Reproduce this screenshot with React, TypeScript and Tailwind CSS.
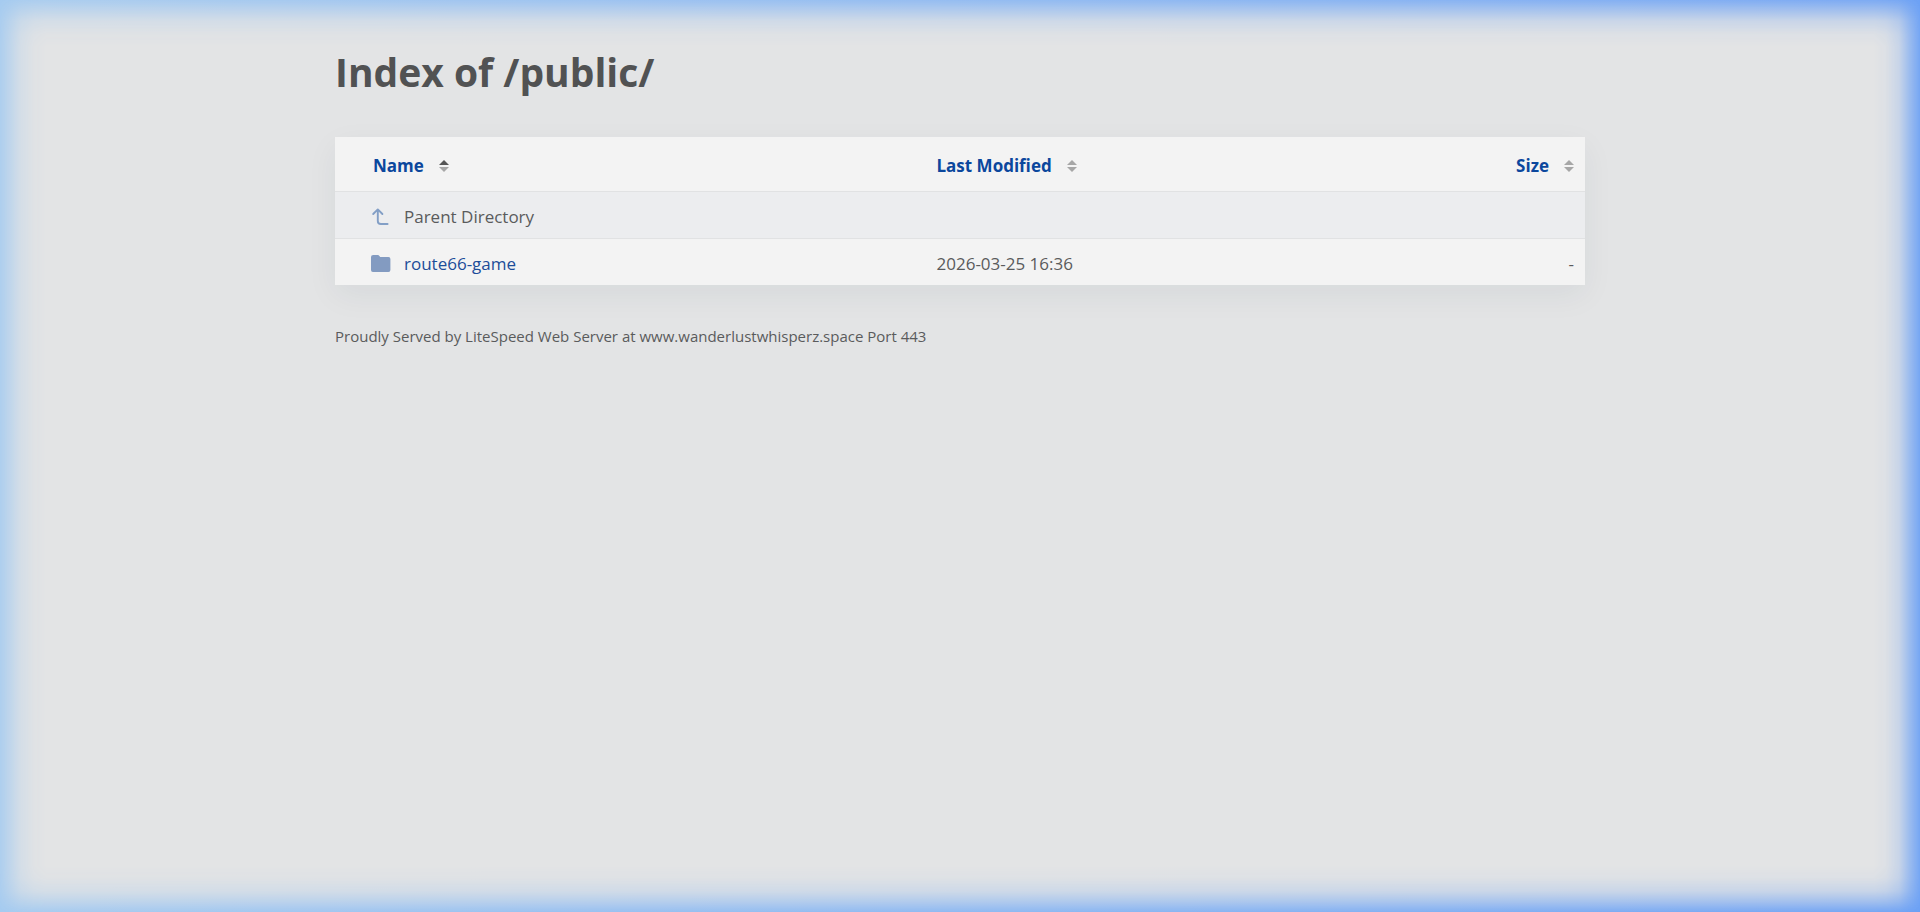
import clsx from "clsx";

type SortIconProps = {
  active?: boolean;
};

function SortIcon({ active }: SortIconProps) {
  return (
    <svg width="10" height="12" viewBox="0 0 10 12" className="shrink-0" aria-hidden="true">
      <path d="M5 0 10 5H0z" fill={active ? "#555555" : "#a6a6a6"} />
      <path d="M0 7h10L5 12z" fill="#a6a6a6" />
    </svg>
  );
}

function ParentIcon() {
  return (
    <svg
      width="20"
      height="20"
      viewBox="0 0 20 20"
      fill="none"
      stroke="#839fc6"
      strokeWidth="1.9"
      strokeLinecap="round"
      strokeLinejoin="round"
      className="shrink-0"
      aria-hidden="true"
    >
      <path d="M2.2 7 6.8 2.4 11.4 7M6.8 3v11q0 3 3 3h6.8" />
    </svg>
  );
}

function FolderIcon() {
  return (
    <svg width="20" height="20" viewBox="0 0 20 20" className="shrink-0" aria-hidden="true">
      <path
        d="M2.2 1h4.6q1 0 1.6.9l.8 1.2h8.3q1.9 0 1.9 1.9v11.1q0 1.9-1.9 1.9H1.9Q0 18 0 16.1V3q0-2 2.2-2z"
        fill="#839bc1"
      />
    </svg>
  );
}

const columns = [
  { label: "Name", className: "w-[47%] pl-[38px]", active: true },
  { label: "Last Modified", className: "w-[33%] pl-[14px]" },
  { label: "Size", className: "w-[20%] pr-[11px]", right: true },
];

function App() {
  return (
    <div className="min-h-screen bg-[#e3e4e5] px-8 pt-[44px] font-['Open_Sans','Noto_Sans',sans-serif] text-[#5a5b5c]">
      {/* Glow round the window */}
      <div className="pointer-events-none fixed inset-0 bg-linear-to-r from-[#a3caf0] to-[#699ff5] [mask-image:linear-gradient(to_right,rgb(0_0_0/0.85),rgb(0_0_0/0.55)_10px,rgb(0_0_0/0.22)_21px,rgb(0_0_0/0.05)_34px,transparent_46px,transparent_calc(100%-46px),rgb(0_0_0/0.05)_calc(100%-34px),rgb(0_0_0/0.22)_calc(100%-21px),rgb(0_0_0/0.6)_calc(100%-10px),rgb(0_0_0/0.9)),linear-gradient(to_bottom,rgb(0_0_0/0.85),rgb(0_0_0/0.55)_10px,rgb(0_0_0/0.22)_21px,rgb(0_0_0/0.05)_34px,transparent_46px,transparent_calc(100%-46px),rgb(0_0_0/0.05)_calc(100%-34px),rgb(0_0_0/0.22)_calc(100%-21px),rgb(0_0_0/0.55)_calc(100%-10px),rgb(0_0_0/0.9))]" />

      <main className="mx-auto max-w-[1250px]">
        <h1 className="text-[39px] leading-[56px] font-bold text-[#515253]">Index of /public/</h1>

        <table className="mt-[37px] w-full table-fixed border-collapse bg-[#f3f3f3] text-[17px] leading-6 shadow-[0_10px_30px_rgb(0_50_60/0.06)]">
          <thead>
            <tr className="h-[54px] border-b border-[#e1e2e3]">
              {columns.map((col) => (
                <th key={col.label} scope="col" className={clsx("pt-1 text-left", col.className)}>
                  <button
                    type="button"
                    className={clsx(
                      "flex items-center gap-[15px] font-bold text-[#0b479d]",
                      col.right && "ml-auto",
                    )}
                  >
                    {col.label}
                    <SortIcon active={col.active} />
                  </button>
                </th>
              ))}
            </tr>
          </thead>
          <tbody>
            <tr className="h-[47px] border-b border-[#e1e2e3] bg-[#ecedef]">
              <td className="pt-1 pl-9">
                <a href="#parent" className="flex items-center gap-[13px]">
                  <ParentIcon />
                  Parent Directory
                </a>
              </td>
              <td />
              <td />
            </tr>
            <tr className="h-[47px]">
              <td className="pt-1 pl-9">
                <a href="#route66-game" className="flex items-center gap-[13px] text-[#1c4d99]">
                  <FolderIcon />
                  route66-game
                </a>
              </td>
              <td className="pt-1 pl-[14px]">2026-03-25 16:36</td>
              <td className="pt-1 pr-[11px] text-right">-</td>
            </tr>
          </tbody>
        </table>

        <footer className="mt-[39px] text-[15px] leading-6">
          Proudly Served by LiteSpeed Web Server at www.wanderlustwhisperz.space Port 443
        </footer>
      </main>
    </div>
  );
}

export default App;
